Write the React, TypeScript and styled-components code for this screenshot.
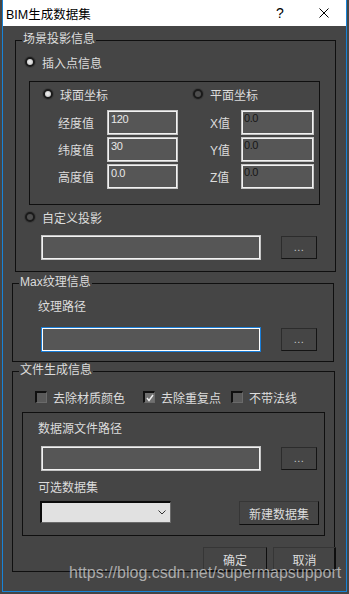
import React from 'react';
import styled, { createGlobalStyle, css } from 'styled-components';

const GlobalStyle = createGlobalStyle`
  html, body {
    margin: 0;
    padding: 0;
    background: #454545;
  }
  body {
    font-family: "Liberation Sans", "Noto Sans CJK SC", sans-serif;
    font-size: 12px;
  }
  #root {
    width: 349px;
    height: 594px;
    overflow: hidden;
  }
`;

const Window = styled.div`
  position: relative;
  box-sizing: border-box;
  width: 345px;
  height: 592px;
  margin-left: 2px;
  border: 1px solid #1883d7;
  border-top: none;
  display: flex;
  flex-direction: column;
`;

const TitleBar = styled.div`
  flex: none;
  height: 26px;
  background: #ffffff;
  color: #000000;
  display: flex;
  align-items: center;
  padding: 0 17px 0 3px;
  font-size: 12.5px;
`;

const Title = styled.span`
  flex: 1;
  white-space: nowrap;
`;

const Help = styled.span`
  width: 8px;
  font-size: 14px;
  line-height: 16px;
  margin-right: 35px;
`;

const Body = styled.div`
  flex: 1;
  background: #454545;
  display: flex;
  flex-direction: column;
  align-items: flex-start;
  padding: 0 0 0 9px;
  color: #dcdcdc;
`;

const Group = styled.div<{ $x: number; $top: number; $w: number; $h: number }>`
  position: relative;
  box-sizing: border-box;
  flex: none;
  margin: ${(p) => p.$top}px 0 0 ${(p) => p.$x}px;
  width: ${(p) => p.$w}px;
  height: ${(p) => p.$h}px;
  border: 1px solid #0f0f0f;
  display: flex;
  flex-direction: column;
  align-items: flex-start;
`;

const Legend = styled.span`
  position: absolute;
  top: -9px;
  left: 6px;
  padding: 0 1px;
  background: #454545;
  color: #dcdcdc;
  line-height: 14px;
  white-space: nowrap;
`;

const SubFrame = styled.div<{ $x: number; $top: number; $w: number }>`
  box-sizing: border-box;
  flex: none;
  margin: ${(p) => p.$top}px 0 0 ${(p) => p.$x}px;
  width: ${(p) => p.$w}px;
  height: 124px;
  border: 1px solid #0f0f0f;
  display: flex;
  flex-direction: column;
  align-items: flex-start;
`;

const Line = styled.div<{ $x: number; $top: number }>`
  display: flex;
  align-items: center;
  height: 16px;
  margin: ${(p) => p.$top}px 0 0 ${(p) => p.$x}px;
  white-space: nowrap;
`;

const Option = styled.span<{ $w?: number; $gap?: number }>`
  display: flex;
  align-items: center;
  gap: ${(p) => p.$gap ?? 7}px;
  ${(p) =>
    p.$w &&
    css`
      width: ${p.$w}px;
    `}
`;

const Radio = styled.span<{ $on?: boolean }>`
  box-sizing: border-box;
  width: 10px;
  height: 10px;
  border-radius: 50%;
  border: 2px solid #1a1a1a;
  background: ${(p) => (p.$on ? 'radial-gradient(circle at 45% 45%, #f0f0f0 0, #d0d0d0 60%, #9a9a9a 100%)' : '#4e4e4e')};
  box-shadow: 0 0 0 1px #3c3c3c;
`;

const Check = styled.span<{ $on?: boolean }>`
  box-sizing: border-box;
  width: 12px;
  height: 12px;
  border: 2px solid #101010;
  border-right: 1px solid #6a6a6a;
  border-bottom: 1px solid #6a6a6a;
  background: ${(p) => (p.$on ? '#707070' : '#5a5a5a')};
  display: flex;
  align-items: center;
  justify-content: center;
`;

const FieldRow = styled.div<{ $top: number }>`
  display: flex;
  align-items: center;
  height: 25px;
  margin-top: ${(p) => p.$top}px;
`;

const Label = styled.span<{ $w: number; $x: number }>`
  width: ${(p) => p.$w}px;
  margin-left: ${(p) => p.$x}px;
  white-space: nowrap;
`;

const Field = styled.div<{ $w: number; $dim?: boolean; $focus?: boolean }>`
  box-sizing: border-box;
  flex: none;
  width: ${(p) => p.$w}px;
  height: 25px;
  background: #565656;
  border: 1px solid #c4c4c4;
  box-shadow: inset 0 0 0 1px #f2f2f2;
  color: ${(p) => (p.$dim ? '#161616' : '#e8e8e8')};
  padding: ${(p) => (p.$dim ? '0 0 0 2px' : '1px 0 0 3px')};
  font-size: 11px;
  letter-spacing: -0.4px;
  line-height: 14px;
  ${(p) =>
    p.$focus &&
    css`
      border-color: #1a7ed8;
      box-shadow: inset 0 0 0 1px #ffffff;
    `}
`;

const PathRow = styled.div<{ $x: number; $top: number }>`
  display: flex;
  align-items: flex-start;
  margin: ${(p) => p.$top}px 0 0 ${(p) => p.$x}px;
`;

const Browse = styled.div`
  box-sizing: border-box;
  width: 36px;
  height: 23px;
  margin: 1px 0 0 20px;
  border: 1px solid #2c2c2c;
  border-right-color: #141414;
  border-bottom-color: #141414;
  color: #c8c8c8;
  font-size: 11px;
  display: flex;
  align-items: center;
  justify-content: center;
  padding-bottom: 1px;
  letter-spacing: 0.5px;
`;

const Select = styled.div`
  box-sizing: border-box;
  width: 131px;
  height: 22px;
  background: #e1e1e1;
  border-top: 2px solid #0c0c0c;
  border-left: 2px solid #0c0c0c;
  border-right: 1px solid #6a6a6a;
  border-bottom: 1px solid #6a6a6a;
  display: flex;
  align-items: center;
  justify-content: flex-end;
  padding: 0 4px 1px 0;
`;

const Button = styled.div<{ $w: number }>`
  box-sizing: border-box;
  width: ${(p) => p.$w}px;
  height: 24px;
  border: 1px solid #0e0e0e;
  border-top-color: #363636;
  border-left-color: #363636;
  color: #dcdcdc;
  display: flex;
  align-items: center;
  justify-content: center;
  white-space: nowrap;
`;

const DatasetRow = styled.div`
  display: flex;
  align-items: flex-start;
  margin: 7px 0 0 17px;
  gap: 68px;
`;

const Actions = styled.div`
  align-self: flex-end;
  display: flex;
  gap: 6px;
  margin: 11px -2px 0 0;
`;

const Watermark = styled.div`
  position: absolute;
  left: 66px;
  top: 564px;
  font-family: "Liberation Sans", Arial, sans-serif;
  font-size: 16px;
  line-height: 18px;
  color: rgba(214, 214, 214, 0.72);
  white-space: nowrap;
  pointer-events: none;
`;

const CloseIcon = () => (
  <svg width="10" height="10" viewBox="0 0 10 10">
    <path d="M0.5 0.5 L9.5 9.5 M9.5 0.5 L0.5 9.5" stroke="#000" strokeWidth="1" />
  </svg>
);

const Tick = () => (
  <svg width="8" height="8" viewBox="0 0 8 8">
    <path d="M1 4 L3 6.5 L7 1" fill="none" stroke="#f2f2f2" strokeWidth="1.4" />
  </svg>
);

const Chevron = () => (
  <svg width="8" height="5" viewBox="0 0 8 5">
    <path d="M0.5 0.5 L4 4 L7.5 0.5" fill="none" stroke="#333" strokeWidth="1" />
  </svg>
);

const coords = [
  { name: '经度值', value: '120', axis: 'X值' },
  { name: '纬度值', value: '30', axis: 'Y值' },
  { name: '高度值', value: '0.0', axis: 'Z值' },
];

const PathPicker = ({ x, top, focus }: { x: number; top: number; focus?: boolean }) => (
  <PathRow $x={x} $top={top}>
    <Field $w={220} $focus={focus} />
    <Browse>...</Browse>
  </PathRow>
);

export default function App() {
  return (
    <>
      <GlobalStyle />
      <Window>
        <TitleBar>
          <Title>BIM生成数据集</Title>
          <Help>?</Help>
          <CloseIcon />
        </TitleBar>
        <Body>
          <Group $x={3} $top={14} $w={321} $h={232}>
            <Legend>场景投影信息</Legend>
            <Line $x={9} $top={13}>
              <Option>
                <Radio $on />
                插入点信息
              </Option>
            </Line>
            <SubFrame $x={13} $top={11} $w={291}>
              <Line $x={13} $top={4}>
                <Option $w={150}>
                  <Radio $on />
                  球面坐标
                </Option>
                <Option>
                  <Radio />
                  平面坐标
                </Option>
              </Line>
              {coords.map((c, i) => (
                <FieldRow key={c.name} $top={i === 0 ? 8 : 2}>
                  <Label $w={49} $x={28}>
                    {c.name}
                  </Label>
                  <Field $w={71}>{c.value}</Field>
                  <Label $w={31} $x={32}>
                    {c.axis}
                  </Label>
                  <Field $w={73} $dim>
                    0.0
                  </Field>
                </FieldRow>
              ))}
            </SubFrame>
            <Line $x={9} $top={4}>
              <Option>
                <Radio />
                自定义投影
              </Option>
            </Line>
            <PathPicker x={25} top={10} />
          </Group>

          <Group $x={0} $top={11} $w={322} $h={79}>
            <Legend>Max纹理信息</Legend>
            <Line $x={25} $top={13}>
              纹理路径
            </Line>
            <PathPicker x={28} top={14} focus />
          </Group>

          <Group $x={0} $top={9} $w={323} $h={201}>
            <Legend>文件生成信息</Legend>
            <Line $x={22} $top={17}>
              <Option $w={108} $gap={6}>
                <Check />
                去除材质颜色
              </Option>
              <Option $w={88} $gap={6}>
                <Check $on>
                  <Tick />
                </Check>
                去除重复点
              </Option>
              <Option $gap={6}>
                <Check />
                不带法线
              </Option>
            </Line>
            <SubFrame $x={9} $top={7} $w={303}>
              <Line $x={15} $top={6}>
                数据源文件路径
              </Line>
              <PathPicker x={18} top={11} />
              <Line $x={15} $top={7}>
                可选数据集
              </Line>
              <DatasetRow>
                <Select>
                  <Chevron />
                </Select>
                <Button $w={80}>新建数据集</Button>
              </DatasetRow>
            </SubFrame>
            <Actions>
              <Button $w={64}>确定</Button>
              <Button $w={63}>取消</Button>
            </Actions>
          </Group>
        </Body>
        <Watermark>https://blog.csdn.net/supermapsupport</Watermark>
      </Window>
    </>
  );
}
